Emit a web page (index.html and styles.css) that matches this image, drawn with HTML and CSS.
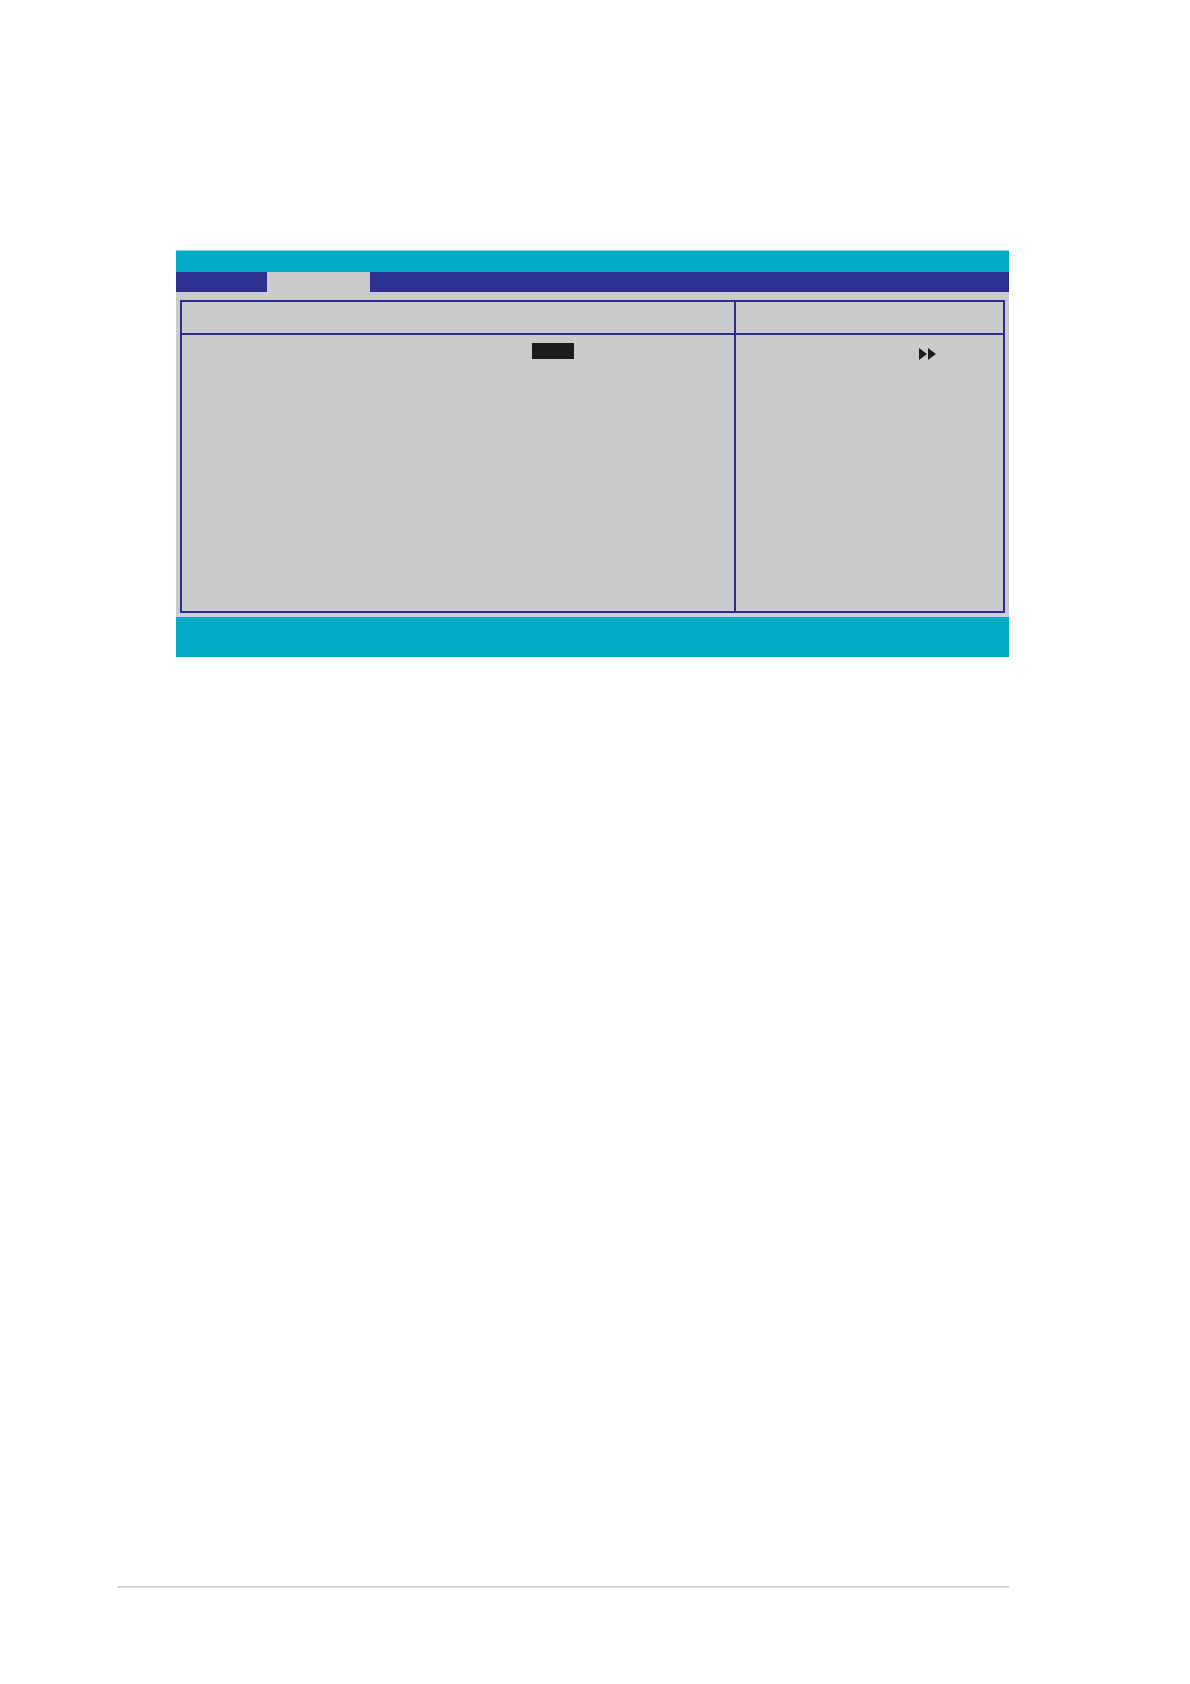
FILE: index.html
```html
<!DOCTYPE html>
<html>
<head>
<meta charset="utf-8">
<link rel="stylesheet" href="styles.css">
</head>
<body>
<div class="page">
  <div class="bios">
    <div class="titlebar"></div>
    <div class="menubar">
      <div class="tab"></div>
      <div class="tab active"></div>
    </div>
    <div class="body">
      <div class="panel">
        <div class="head left"></div>
        <div class="head right"></div>
        <div class="col left">
          <div class="row"><span class="value"></span></div>
        </div>
        <div class="col right">
          <div class="help">
            <svg class="arrows" width="18" height="12" viewBox="0 0 18 12"><polygon points="0,0 8,6 0,12" fill="#1e1b1b"/><polygon points="9,0 17,6 9,12" fill="#1e1b1b"/></svg>
          </div>
        </div>
      </div>
    </div>
    <div class="strip"></div>
    <div class="footer"></div>
  </div>
  <div class="rule"></div>
</div>
</body>
</html>
```

FILE: styles.css
```css
html, body {
  margin: 0;
  padding: 0;
  background: #ffffff;
  font-family: "Liberation Sans", Arial, sans-serif;
}
.page {
  width: 1190px;
  height: 1684px;
  padding-top: 250px;
  box-sizing: border-box;
}
.bios {
  width: 833px;
  margin-left: 176px;
}
.titlebar {
  height: 21px;
  background: #00abc5;
  border-top: 1px solid #7fd3de;
}
.menubar {
  height: 20px;
  background: #2e3192;
  display: flex;
}
.tab {
  width: 91px;
}
.tab.active {
  width: 103px;
  background: #c9cbcc;
}
.body {
  background: #c9cbcc;
  padding: 8px 4px 0 4px;
}
.panel {
  height: 313px;
  box-sizing: border-box;
  border: 2px solid #2e2d8e;
  display: grid;
  grid-template-columns: 554px 1fr;
  grid-template-rows: 33px 1fr;
}
.head {
  border-bottom: 2px solid #2e2d8e;
}
.head.left, .col.left {
  border-right: 2px solid #2e2d8e;
}
.col.left {
  padding: 8px 0 0 350px;
}
.value {
  display: block;
  width: 42px;
  height: 16px;
  background: #1e1b1b;
}
.col.right {
  padding: 13px 0 0 183px;
}
.arrows {
  display: block;
}
.strip {
  height: 4px;
  background: #c6d0e0;
}
.footer {
  height: 40px;
  background: #00abc5;
}
.rule {
  margin-top: 929px;
  margin-left: 117px;
  width: 892px;
  height: 2px;
  background: #d4d4d4;
}
```
